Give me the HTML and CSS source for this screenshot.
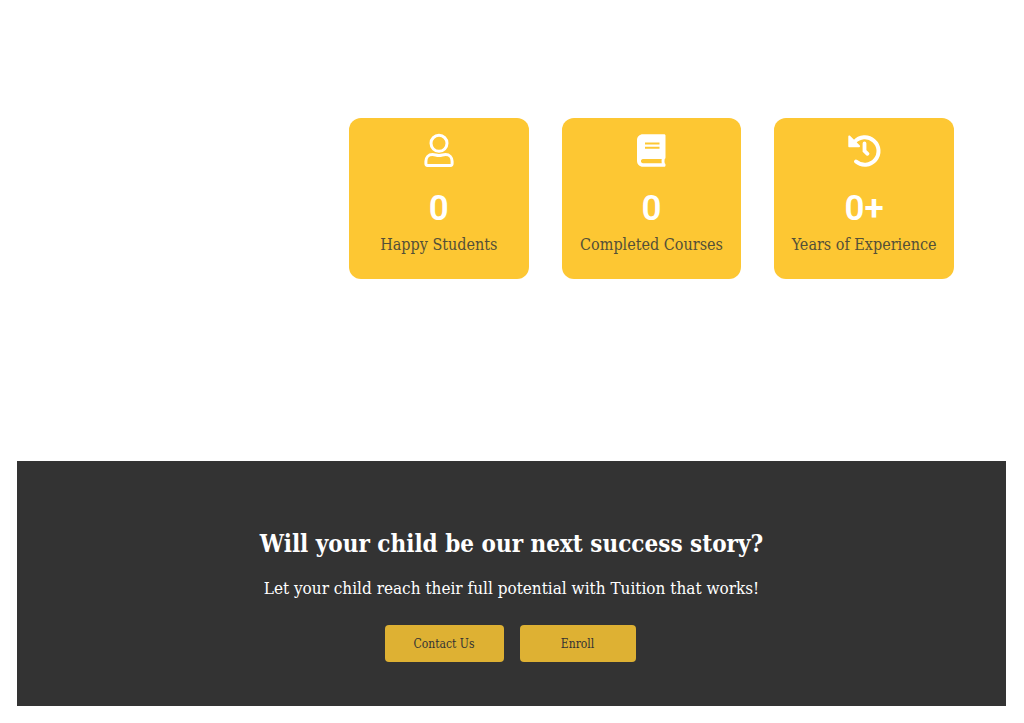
FILE: index.html
```html
<!DOCTYPE html>
<html lang="en">
<head>
  <meta charset="utf-8">
  <meta name="viewport" content="width=device-width, initial-scale=1">
  <title>Tuition</title>
  <link rel="stylesheet" href="styles.css">
</head>
<body>
  <section class="stats">
    <div class="card">
      <svg class="icon" viewBox="0 0 32 34" aria-hidden="true">
        <circle cx="16" cy="9.300" r="8" fill="none" stroke="#fff" stroke-width="3"/>
        <path d="M9.500 20.500c2.600 0 3.600 1 6.500 1s3.900-1 6.500-1c4 0 6.600 3 6.600 6.800v2.500c0 1-.6 1.600-1.600 1.600h-23c-1 0-1.600-.6-1.600-1.600v-2.500c0-3.800 2.600-6.800 6.600-6.800z" fill="none" stroke="#fff" stroke-width="3"/>
      </svg>
      <span class="number">0</span>
      <p>Happy Students</p>
    </div>
    <div class="card">
      <svg class="icon" viewBox="0 0 32 34" aria-hidden="true">
        <path fill="#fff" fill-rule="evenodd" d="M8 .3h21c1 0 1.500.5 1.500 1.500v21.700c0 .7-.3 1.200-.8 1.500-.3 1.300-.3 3 0 4.200.5.300.8.700.8 1.300v.8c0 1-.5 1.500-1.500 1.500H8c-3.500 0-6-2.500-6-6V6.300c0-3.500 2.500-6 6-6zM10 8.500v2h14.500v-2zm0 4.200v2h14.500v-2zM8 25c-2.700 0-2.700 4.200 0 4.200h18.700c-.2-1.300-.2-2.900 0-4.200z"/>
      </svg>
      <span class="number">0</span>
      <p>Completed Courses</p>
    </div>
    <div class="card">
      <svg class="icon" viewBox="0 0 32 34" aria-hidden="true">
        <path d="M6.500 8A13.700 13.700 0 1 1 8 27.500" fill="none" stroke="#fff" stroke-width="4" stroke-linecap="round"/>
        <path d="M.3 2.500v9.800c0 .6.400 1 1 1h9.800c.9 0 1.300-1 .7-1.700L2 1.800C1.400 1.200.3 1.600.3 2.500z" fill="#fff"/>
        <path d="M16.500 9.500v7.500l3 2.800" fill="none" stroke="#fff" stroke-width="3.800" stroke-linecap="round"/>
      </svg>
      <span class="number">0+</span>
      <p>Years of Experience</p>
    </div>
  </section>

  <section class="cta">
    <h2>Will your child be our next success story?</h2>
    <h3>Let your child reach their full potential with Tuition that works!</h3>
    <div class="buttons">
      <button class="button" type="button">Contact Us</button>
      <button class="button button-enroll" type="button">Enroll</button>
    </div>
  </section>
</body>
</html>
```
FILE: styles.css
```css
* {
  box-sizing: border-box;
}

body {
  margin: 0;
  padding: 17px 18px 17px 17px;
  background-color: #fff;
  font-family: "Roboto Slab", "DejaVu Serif Condensed", "DejaVu Serif", serif;
}

/* Counters */
.stats {
  display: grid;
  grid-template-columns: repeat(3, 1fr);
  gap: 33px;
  margin-left: 280px;
  padding: 101px 52px 182px;
}

.card {
  display: flex;
  flex-direction: column;
  align-items: center;
  padding: 16px 0 22px;
  border-radius: 12px;
  background-color: #fdc733;
  text-align: center;
}

.icon {
  width: 32px;
  height: 34px;
  overflow: visible;
}

.number {
  margin-top: 20px;
  color: #fff;
  font-family: "Roboto", sans-serif;
  font-size: 35px;
  font-weight: 600;
  line-height: 42px;
}

.card p {
  margin: 2px 0 0;
  color: #545038;
  font-size: 16px;
  line-height: 25px;
  white-space: nowrap;
}

/* Call to action */
.cta {
  display: flex;
  flex-direction: column;
  align-items: center;
  padding: 65px 16px 44px;
  background-color: #333;
  color: #fff;
  text-align: center;
}

.cta h2 {
  margin: 0;
  font-size: 24px;
  line-height: 36px;
}

.cta h3 {
  margin: 14px 0 25px;
  font-size: 17px;
  font-weight: 500;
  line-height: 24px;
}

.buttons {
  display: flex;
  gap: 16px;
  padding-right: 3px;
}

.button {
  min-width: 119px;
  height: 37px;
  padding: 0;
  border: none;
  border-radius: 4px;
  background-color: #deb133;
  color: #333;
  font-family: inherit;
  font-size: 12px;
  cursor: pointer;
}

.button-enroll {
  min-width: 116px;
}

.button:hover {
  background-color: #fdc733;
}
```
